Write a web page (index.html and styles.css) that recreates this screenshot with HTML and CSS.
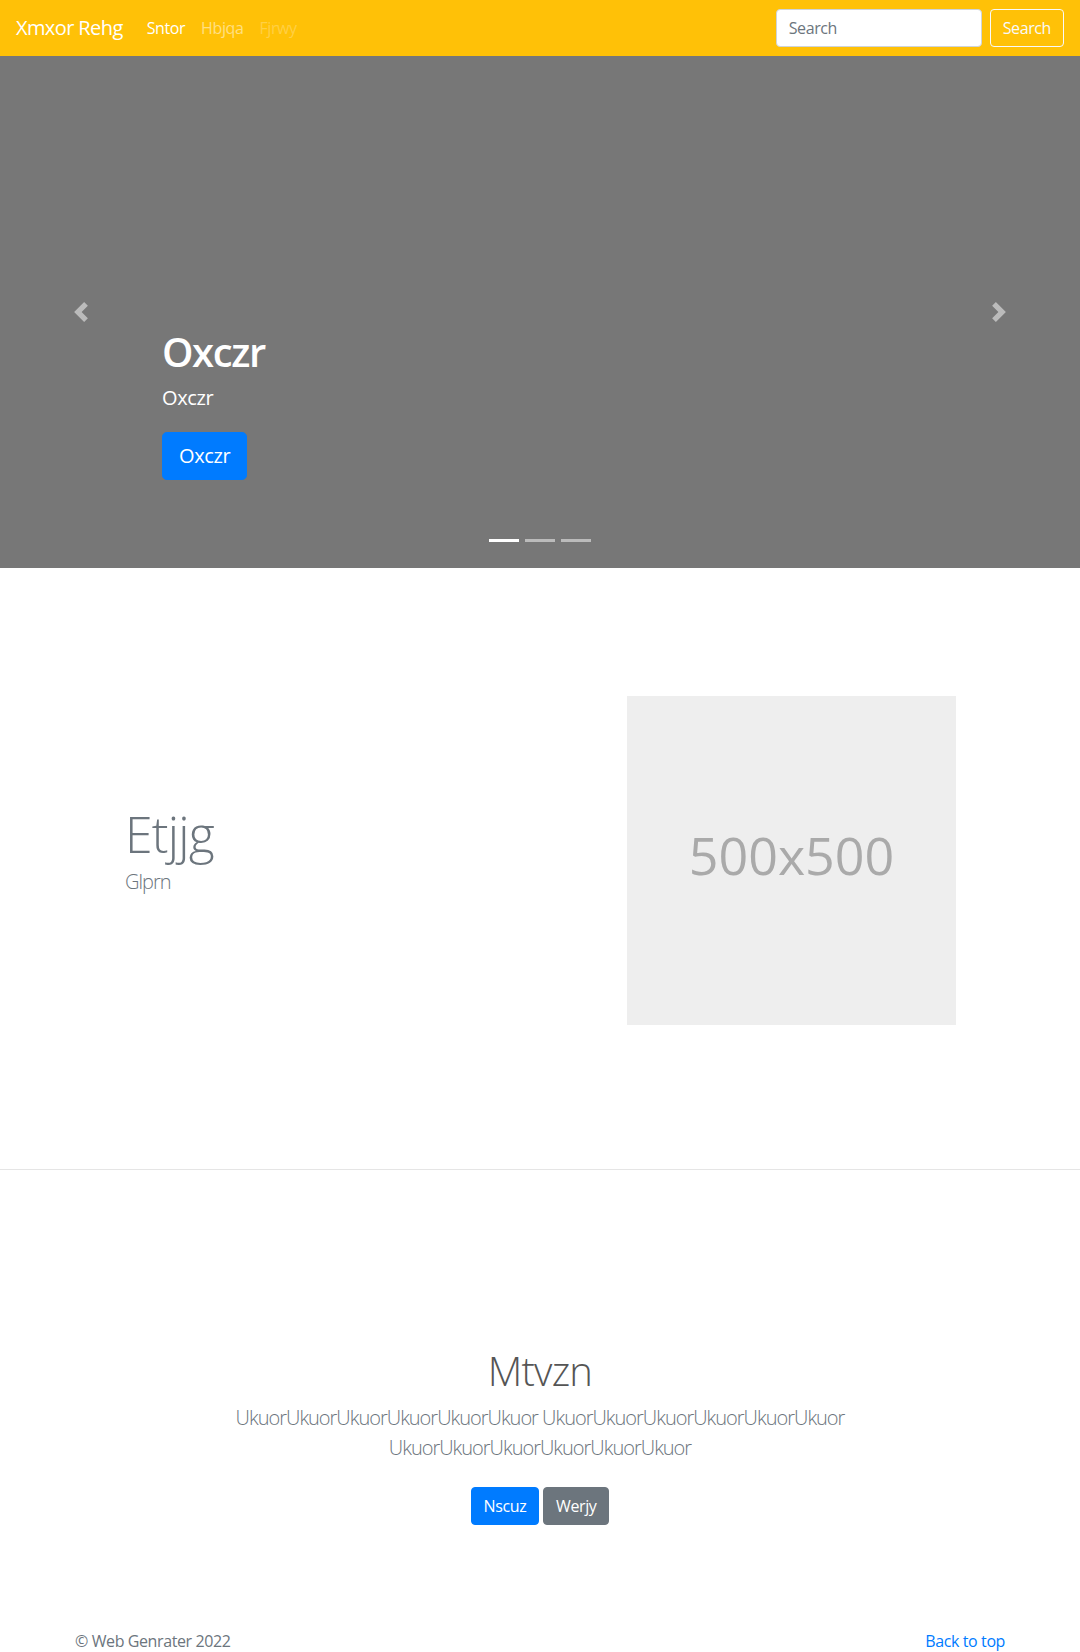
FILE: index.html
```html
<!DOCTYPE html>
<html lang="en">
<head>
<meta charset="utf-8">
<title>Xmxor Rehg</title>
<link rel="stylesheet" href="styles.css">
</head>
<body>
<header class="navbar">
  <a class="brand" href="#">Xmxor Rehg</a>
  <nav class="nav">
    <a class="nav-link active" href="#">Sntor</a>
    <a class="nav-link" href="#">Hbjqa</a>
    <a class="nav-link disabled" href="#">Fjrwy</a>
  </nav>
  <form class="search">
    <input class="search-input" type="text" placeholder="Search">
    <button class="search-btn" type="button">Search</button>
  </form>
</header>

<section class="carousel">
  <div class="caption">
    <h1 class="caption-title">Oxczr</h1>
    <p class="caption-text">Oxczr</p>
    <p class="caption-action"><a class="btn btn-lg btn-primary" href="#">Oxczr</a></p>
  </div>
  <a class="control control-prev" href="#">
    <svg width="20" height="20" viewBox="0 0 8 8"><path fill="#fff" d="M5.25 0l-4 4 4 4 1.5-1.5L4.25 4l2.5-2.5L5.25 0z"/></svg>
  </a>
  <a class="control control-next" href="#">
    <svg width="20" height="20" viewBox="0 0 8 8"><path fill="#fff" d="M2.75 0l-1.5 1.5L3.75 4l-2.5 2.5L2.75 8l4-4-4-4z"/></svg>
  </a>
  <ol class="indicators">
    <li class="indicator active"></li>
    <li class="indicator"></li>
    <li class="indicator"></li>
  </ol>
</section>

<section class="featurette">
  <div class="featurette-text">
    <h2 class="featurette-heading">Etjjg</h2>
    <p class="featurette-lead">Glprn</p>
  </div>
  <div class="placeholder">500x500</div>
</section>

<hr class="divider">

<section class="hero">
  <h1 class="hero-title">Mtvzn</h1>
  <p class="hero-lead">UkuorUkuorUkuorUkuorUkuorUkuor UkuorUkuorUkuorUkuorUkuorUkuor UkuorUkuorUkuorUkuorUkuorUkuor</p>
  <p class="hero-actions">
    <a class="btn btn-primary" href="#">Nscuz</a>
    <a class="btn btn-secondary" href="#">Werjy</a>
  </p>
</section>

<footer class="footer">
  <p class="footer-copy">© Web Genrater 2022</p>
  <p class="footer-top"><a href="#">Back to top</a></p>
</footer>
</body>
</html>
```

FILE: styles.css
```css
* { box-sizing: border-box; }

body {
  margin: 0;
  font-family: "Open Sans", "Noto Sans", sans-serif;
  font-size: 16px;
  line-height: 1.5;
  letter-spacing: -0.025em;
  color: #212529;
  background: #fff;
}

a { text-decoration: none; }

/* Navbar */
.navbar {
  height: 56px;
  background: #ffc107;
  display: flex;
  align-items: center;
  padding: 8px 16px;
}
.brand {
  color: #fff;
  font-size: 20px;
  line-height: 30px;
  margin-right: 16px;
  letter-spacing: -0.03em;
}
.nav {
  display: flex;
  flex: 1;
}
.nav-link {
  padding: 8px;
  color: rgba(255, 255, 255, 0.5);
}
.nav-link.active { color: #fff; }
.nav-link.disabled { color: rgba(255, 255, 255, 0.25); }

.search {
  display: flex;
  gap: 8px;
  margin: 0;
}
.search-input {
  width: 206px;
  height: 38px;
  padding: 6px 12px;
  font: inherit;
  font-size: 16px;
  letter-spacing: -0.025em;
  color: #495057;
  background: #fff;
  border: 1px solid #ced4da;
  border-radius: 4px;
}
.search-input::placeholder { color: #6c757d; }
.search-btn {
  height: 38px;
  padding: 6px 12px;
  font: inherit;
  font-size: 16px;
  letter-spacing: -0.025em;
  color: #f8f9fa;
  background: transparent;
  border: 1px solid #f8f9fa;
  border-radius: 4px;
}

/* Carousel */
.carousel {
  position: relative;
  height: 512px;
  background: #777;
  display: flex;
  flex-direction: column;
  justify-content: flex-end;
  padding: 0 15% 48px;
}
.caption {
  color: #fff;
  padding: 20px 0;
}
.caption-title {
  margin: 0 0 8px;
  font-size: 40px;
  line-height: 1.2;
  font-weight: 600;
  letter-spacing: -0.035em;
}
.caption-text {
  margin: 0 0 20px;
  font-size: 20px;
  line-height: 1.4;
}
.caption-action { margin: 0 0 20px; }

.btn {
  display: inline-block;
  padding: 6px 12px;
  font-size: 16px;
  line-height: 24px;
  border: 1px solid transparent;
  border-radius: 4px;
  color: #fff;
}
.btn-lg {
  padding: 8px 16px;
  font-size: 20px;
  line-height: 30px;
  border-radius: 4.8px;
}
.btn-primary { background: #007bff; border-color: #007bff; }
.btn-secondary { background: #6c757d; border-color: #6c757d; }

.control {
  position: absolute;
  top: 0;
  bottom: 0;
  width: 15%;
  display: flex;
  align-items: center;
  justify-content: center;
  opacity: 0.5;
}
.control svg { display: block; }
.control-prev { left: 0; }
.control-next { right: 0; }

.indicators {
  position: absolute;
  left: 0;
  right: 0;
  bottom: 16px;
  margin: 0;
  padding: 0;
  list-style: none;
  display: flex;
  justify-content: center;
}
.indicator {
  width: 30px;
  height: 3px;
  margin: 10px 3px;
  background: #fff;
  opacity: 0.5;
}
.indicator.active { opacity: 1; }

/* Featurette */
.featurette {
  width: 930px;
  margin: 0 auto;
  padding: 128px 49px 64px 50px;
  display: flex;
  align-items: center;
}
.featurette-text { flex: 1; }
.featurette-heading {
  margin: 0 0 8px;
  font-size: 50px;
  line-height: 1;
  font-weight: 300;
  letter-spacing: -0.8px;
  color: #6c757d;
}
.featurette-lead {
  margin: 0 0 16px;
  font-size: 20px;
  font-weight: 300;
  letter-spacing: -0.05em;
  color: #6c757d;
}
.placeholder {
  width: 329px;
  height: 329px;
  padding-bottom: 12px;
  background: #eee;
  color: #aaa;
  font-size: 52px;
  letter-spacing: 0;
  display: flex;
  align-items: center;
  justify-content: center;
}

.divider {
  margin: 80px 0 0;
  border: 0;
  border-top: 1px solid rgba(0, 0, 0, 0.1);
}

/* Hero */
.hero {
  text-align: center;
  padding: 177px 0 0;
}
.hero-title {
  margin: 0 0 8px;
  font-size: 40px;
  line-height: 1.2;
  font-weight: 300;
  letter-spacing: -0.02em;
  color: #555;
}
.hero-lead {
  max-width: 700px;
  margin: 0 auto 24px;
  font-size: 20px;
  font-weight: 300;
  letter-spacing: -0.05em;
  color: #6c757d;
}
.hero-actions {
  margin: 0;
}

/* Footer */
.footer {
  width: 930px;
  margin: 0 auto;
  padding: 104px 0 48px;
  display: flex;
  justify-content: space-between;
  color: #6c757d;
}
.footer p { margin: 0; }
.footer-top a { color: #007bff; }
```
